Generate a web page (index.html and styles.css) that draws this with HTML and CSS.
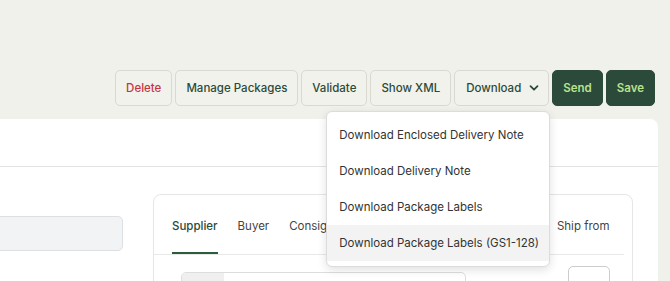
FILE: index.html
```html
<!DOCTYPE html>
<html lang="en">
<head>
  <meta charset="UTF-8">
  <title>Despatch Advice</title>
  <link rel="stylesheet" href="styles.css">
</head>
<body>
  <div class="toolbar">
    <button class="btn danger">Delete</button>
    <button class="btn">Manage Packages</button>
    <button class="btn">Validate</button>
    <button class="btn">Show XML</button>
    <div class="dropdown">
      <button class="btn toggle">
        Download
        <svg class="chevron" width="10" height="10" viewBox="0 0 10 10">
          <path d="M1.5 3.2 L5 6.7 L8.5 3.2" fill="none" stroke="currentColor" stroke-width="1.8" stroke-linecap="round" stroke-linejoin="round"/>
        </svg>
      </button>
      <!-- open menu -->
      <ul class="menu">
        <li>Download Enclosed Delivery Note</li>
        <li>Download Delivery Note</li>
        <li>Download Package Labels</li>
        <li class="active">Download Package Labels (GS1-128)</li>
      </ul>
    </div>
    <button class="btn primary">Send</button>
    <button class="btn primary">Save</button>
  </div>

  <div class="panel">
    <div class="panel-head"></div>
    <div class="panel-body">
      <div class="field"></div>
      <div class="card">
        <div class="tabs">
          <span class="tab selected">Supplier</span>
          <span class="tab">Buyer</span>
          <span class="tab">Consignee</span>
          <span class="tab">Invoice to</span>
          <span class="tab">Delivery locations</span>
          <span class="tab">Ship from</span>
        </div>
        <div class="card-body">
          <div class="input-group">
            <span class="addon"></span>
            <span class="control"></span>
          </div>
          <div class="small-box"></div>
        </div>
      </div>
    </div>
  </div>
</body>
</html>
```

FILE: styles.css
```css
body {
  margin: 0;
  font-family: Inter, "Noto Sans", sans-serif;
  background: #f1f1ec;
  color: #333;
  overflow: hidden;
}
.toolbar {
  display: flex;
  justify-content: flex-end;
  gap: 3px;
  padding: 70px 15px 13px 0;
}
.btn {
  height: 36px;
  padding: 0 10px;
  border: 1px solid #d9d9d2;
  border-radius: 5px;
  background: #f2f2ed;
  color: #2b4a38;
  font-family: inherit;
  font-size: 11.5px;
  font-weight: 500;
  display: flex;
  align-items: center;
  cursor: pointer;
}
.btn.danger {
  color: #c8343f;
}
.btn.toggle {
  padding: 0 9px 0 11px;
}
.btn.primary {
  background: #2b4a39;
  border-color: #2b4a39;
  color: #b9e28f;
  font-weight: 600;
}
.chevron {
  margin-left: 8px;
}
.dropdown {
  position: relative;
}
.menu {
  position: absolute;
  top: 41px;
  right: -1px;
  width: 222px;
  margin: 0;
  padding: 5px 0;
  list-style: none;
  background: #fff;
  border: 1px solid #dcdcdc;
  border-radius: 6px;
  box-shadow: 0 3px 10px rgba(0,0,0,0.12);
  z-index: 10;
}
.menu li {
  height: 36px;
  line-height: 37px;
  padding: 0 12px;
  font-size: 11.5px;
  color: #333;
  white-space: nowrap;
}
.menu li.active {
  background: #f3f3f3;
}
.panel {
  background: #fff;
  margin-right: 12px;
  border-top-right-radius: 8px;
  height: 200px;
}
.panel-head {
  height: 47px;
  border-bottom: 1px solid #e4e4e4;
}
.panel-body {
  display: flex;
  align-items: flex-start;
  padding-top: 27px;
}
.field {
  width: 130px;
  height: 33px;
  margin: 22px 0 0 -9px;
  background: #f1f3f5;
  border: 1px solid #dde0e3;
  border-radius: 5px;
}
.card {
  margin-left: 30px;
  width: 478px;
  height: 120px;
  border: 1px solid #e6e6e6;
  border-radius: 8px;
}
.tabs {
  display: flex;
  gap: 20px;
  padding: 0 18px;
  margin: 0 8px 0 0;
  border-bottom: 1px solid #e8e8e8;
  overflow: hidden;
}
.tab {
  font-size: 11.5px;
  color: #444;
  padding: 24px 0 19px;
  white-space: nowrap;
  border-bottom: 2px solid transparent;
}
.tab.selected {
  color: #2b4a38;
  font-weight: 500;
  border-bottom-color: #2b5c3c;
}
.card-body {
  display: flex;
  align-items: flex-start;
  padding: 11px 0 0 27px;
}
.input-group {
  display: flex;
  width: 283px;
  height: 30px;
  margin-top: 6px;
  border: 1px solid #ddd;
  border-radius: 5px;
  overflow: hidden;
}
.addon {
  width: 42px;
  background: #efefef;
}
.control {
  flex: 1;
}
.small-box {
  width: 40px;
  height: 30px;
  margin-left: 102px;
  border: 1px solid #ccc;
  border-radius: 5px;
}
```
